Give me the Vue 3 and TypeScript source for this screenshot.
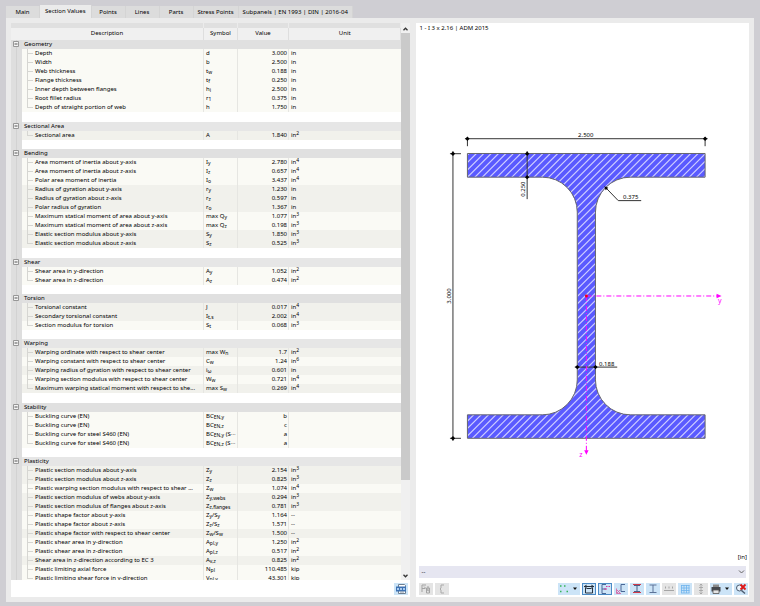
<script setup lang="ts">
import { ref } from 'vue'

interface Row {
  name: string
  symbol: string
  value: string
  unit: string
  shade: boolean
}
interface Group {
  title: string
  open: boolean
  rows: Row[]
}
interface Segment {
  text: string
  small: boolean
}

const r = (name: string, symbol: string, value: string, unit: string, shade = false): Row => ({
  name, symbol, value, unit, shade,
})

const tabs = ['Main', 'Section Values', 'Points', 'Lines', 'Parts', 'Stress Points', 'Subpanels | EN 1993 | DIN | 2016-04']
const activeTab = ref('Section Values')

const groups = ref<Group[]>([
  { title: 'Geometry', open: true, rows: [
    r('Depth', 'd', '3.000', 'in'),
    r('Width', 'b', '2.500', 'in'),
    r('Web thickness', 't{w}', '0.188', 'in'),
    r('Flange thickness', 't{f}', '0.250', 'in'),
    r('Inner depth between flanges', 'h{i}', '2.500', 'in'),
    r('Root fillet radius', 'r{1}', '0.375', 'in'),
    r('Depth of straight portion of web', 'h', '1.750', 'in'),
  ] },
  { title: 'Sectional Area', open: true, rows: [
    r('Sectional area', 'A', '1.840', 'in{2}', true),
  ] },
  { title: 'Bending', open: true, rows: [
    r('Area moment of inertia about y-axis', 'I{y}', '2.780', 'in{4}'),
    r('Area moment of inertia about z-axis', 'I{z}', '0.657', 'in{4}'),
    r('Polar area moment of inertia', 'I{o}', '3.437', 'in{4}'),
    r('Radius of gyration about y-axis', 'r{y}', '1.230', 'in', true),
    r('Radius of gyration about z-axis', 'r{z}', '0.597', 'in', true),
    r('Polar radius of gyration', 'r{o}', '1.367', 'in', true),
    r('Maximum statical moment of area about y-axis', 'max Q{y}', '1.077', 'in{3}'),
    r('Maximum statical moment of area about z-axis', 'max Q{z}', '0.198', 'in{3}'),
    r('Elastic section modulus about y-axis', 'S{y}', '1.850', 'in{3}', true),
    r('Elastic section modulus about z-axis', 'S{z}', '0.525', 'in{3}', true),
  ] },
  { title: 'Shear', open: true, rows: [
    r('Shear area in y-direction', 'A{y}', '1.052', 'in{2}'),
    r('Shear area in z-direction', 'A{z}', '0.474', 'in{2}'),
  ] },
  { title: 'Torsion', open: true, rows: [
    r('Torsional constant', 'J', '0.017', 'in{4}', true),
    r('Secondary torsional constant', 'I{t,s}', '2.002', 'in{4}', true),
    r('Section modulus for torsion', 'S{t}', '0.068', 'in{3}'),
  ] },
  { title: 'Warping', open: true, rows: [
    r('Warping ordinate with respect to shear center', 'max W{n}', '1.7', 'in{2}', true),
    r('Warping constant with respect to shear center', 'C{w}', '1.24', 'in{6}'),
    r('Warping radius of gyration with respect to shear center', 'i{ω}', '0.601', 'in', true),
    r('Warping section modulus with respect to shear center', 'W{w}', '0.721', 'in{4}'),
    r('Maximum warping statical moment with respect to she...', 'max S{w}', '0.269', 'in{4}', true),
  ] },
  { title: 'Stability', open: true, rows: [
    r('Buckling curve (EN)', 'BC{EN,y}', 'b', ''),
    r('Buckling curve (EN)', 'BC{EN,z}', 'c', ''),
    r('Buckling curve for steel S460 (EN)', 'BC{EN,y} (S···', 'a', ''),
    r('Buckling curve for steel S460 (EN)', 'BC{EN,z} (S···', 'a', ''),
  ] },
  { title: 'Plasticity', open: true, rows: [
    r('Plastic section modulus about y-axis', 'Z{y}', '2.154', 'in{3}', true),
    r('Plastic section modulus about z-axis', 'Z{z}', '0.825', 'in{3}', true),
    r('Plastic warping section modulus with respect to shear ...', 'Z{w}', '1.074', 'in{4}'),
    r('Plastic section modulus of webs about y-axis', 'Z{y,webs}', '0.294', 'in{3}', true),
    r('Plastic section modulus of flanges about z-axis', 'Z{z,flanges}', '0.781', 'in{3}', true),
    r('Plastic shape factor about y-axis', 'Z{y}/S{y}', '1.164', '--'),
    r('Plastic shape factor about z-axis', 'Z{z}/S{z}', '1.571', '--'),
    r('Plastic shape factor with respect to shear center', 'Z{w}/S{w}', '1.500', '--', true),
    r('Plastic shear area in y-direction', 'A{pl,y}', '1.250', 'in{2}'),
    r('Plastic shear area in z-direction', 'A{pl,z}', '0.517', 'in{2}'),
    r('Shear area in z-direction according to EC 3', 'A{v,z}', '0.825', 'in{2}', true),
    r('Plastic limiting axial force', 'N{pl}', '110.485', 'kip'),
    r('Plastic limiting shear force in y-direction', 'V{pl,y}', '43.301', 'kip'),
  ] },
])

// Text inside braces is set as a subscript or superscript.
function segments(source: string): Segment[] {
  return source
    .split(/(\{[^}]*\})/)
    .filter((part) => part !== '')
    .map((part) => part.startsWith('{')
      ? { text: part.slice(1, -1), small: true }
      : { text: part, small: false })
}

// 45 degree hatch lines across the whole section, clipped to its outline.
const hatch = Array.from({ length: 72 }, (_, i) => `M${(175 + i * 7.4).toFixed(1)} 440l290-290`).join('')

const ticks = [
  [467.5, 138.5], [705.5, 138.5], [453, 153.5], [453, 438.5],
  [527.3, 153.5], [527.3, 177], [577.5, 367.2], [595.7, 367.2],
]
</script>

<template>
  <main class="window">
    <nav class="tabs">
      <button
        v-for="tab in tabs"
        :key="tab"
        type="button"
        class="tab"
        :class="{ active: tab === activeTab }"
        @click="activeTab = tab"
      >{{ tab }}</button>
    </nav>

    <div class="content">
      <section class="values">
        <div class="table-area">
          <div class="table-clip">
            <table>
              <colgroup>
                <col class="c-gutter"><col class="c-name"><col class="c-symbol"><col class="c-value"><col>
              </colgroup>
              <thead>
                <tr class="strip"><td colspan="2"></td><td></td><td></td><td></td></tr>
                <tr class="heads">
                  <th colspan="2">Description</th><th>Symbol</th><th>Value</th><th>Unit</th>
                </tr>
              </thead>
              <tbody v-for="group in groups" :key="group.title" :class="{ long: group.rows.length > 4 }">
                <tr class="group">
                  <td class="gutter">
                    <button type="button" class="toggle" :aria-label="group.title" @click="group.open = !group.open">
                      <svg viewBox="0 0 7 7"><path d="M.5.5h5v5h-5z" fill="#f4f4f4" stroke="#979797" /><path d="M1.500 3h3" stroke="#555" /></svg>
                    </button>
                  </td>
                  <th colspan="4">{{ group.title }}</th>
                </tr>
                <template v-if="group.open">
                  <tr v-for="(row, i) in group.rows" :key="i" class="row" :class="{ shade: row.shade }">
                    <td class="gutter"></td>
                    <td class="name">{{ row.name }}</td>
                    <td class="symbol"><template v-for="(s, k) in segments(row.symbol)" :key="k"><sub v-if="s.small">{{ s.text }}</sub><template v-else>{{ s.text }}</template></template></td>
                    <td class="value">{{ row.value }}</td>
                    <td class="unit"><template v-for="(s, k) in segments(row.unit)" :key="k"><sup v-if="s.small">{{ s.text }}</sup><template v-else>{{ s.text }}</template></template></td>
                  </tr>
                </template>
                <tr class="spacer"><td class="gutter"></td><td colspan="4"></td></tr>
              </tbody>
            </table>
          </div>
          <div class="scrollbar">
            <button type="button" class="arrow" aria-label="Scroll up"><svg viewBox="0 0 9 6"><path d="M2.500 4.200 4.500 2.200 6.500 4.200" fill="none" stroke="#333" stroke-width="1.300" /></svg></button>
            <div class="track"><div class="thumb"></div></div>
            <button type="button" class="arrow" aria-label="Scroll down"><svg viewBox="0 0 9 6"><path d="M2.500 1.800 4.500 3.800 6.500 1.800" fill="none" stroke="#333" stroke-width="1.300" /></svg></button>
          </div>
        </div>
        <footer class="values-foot">
          <button type="button" class="tool" aria-label="Print table">
            <svg viewBox="0 0 14 12"><path d="M4.500 1.500h6l1 1v2h-7zM4.500 7.500h7v3h-7z" fill="#fff" stroke="#6f7f90" /><path d="M2 3.500h10v5H2z" fill="#3d72b4" /><path d="M3 5h2v2H3zM6 5h2v2H6zM9 5h2v2H9z" fill="#a9cbee" /><path d="M6 9h4" stroke="#8a98a8" /></svg>
          </button>
        </footer>
      </section>

      <section class="preview">
        <h1>1 - I 3 x 2.16 | ADM 2015</h1>
        <svg class="drawing" viewBox="416 34 333 516">
          <defs>
            <clipPath id="outline">
              <path d="M467.500 153.300H705.500V177H630.500A35 35 0 0 0 595.700 212V380A35 35 0 0 0 630.500 415H705.500V438.500H467.500V415H542.500A35 35 0 0 0 577.500 380V212A35 35 0 0 0 542.500 177H467.500Z" />
            </clipPath>
          </defs>
          <g clip-path="url(#outline)">
            <rect x="467" y="153" width="239" height="286" fill="#5a5aff" />
            <path :d="hatch" stroke="#ccccff" stroke-width="1.200" />
          </g>
          <path
            d="M467.500 153.300H705.500V177H630.500A35 35 0 0 0 595.700 212V380A35 35 0 0 0 630.500 415H705.500V438.500H467.500V415H542.500A35 35 0 0 0 577.500 380V212A35 35 0 0 0 542.500 177H467.500Z"
            fill="none" stroke="#66666c" stroke-width="1"
          />
          <g stroke="#333" stroke-width="1" fill="none">
            <path d="M465 138.500H708M467.500 137V146M705.500 137V146" />
            <path d="M453 151V441M450 153.500H461M450 438.500H461" />
            <path d="M527.300 151V199" />
            <path d="M606 187.500 618.500 200.500H641.500" />
            <path d="M575 367.200H617.500" />
          </g>
          <g fill="#000">
            <path v-for="p in ticks" :key="p.join()" :d="`M${p[0] - 2.2} ${p[1]}l2.200-2.200 2.200 2.200-2.200 2.200z`" />
            <path d="m604.500 186 4 1.500-2.500 2.500z" />
          </g>
          <g stroke="#ff00ff" stroke-width="1" stroke-dasharray="5 2 1 2">
            <path d="M586.600 296H718" />
            <path d="M586.600 296V451" />
          </g>
          <path d="M717 293.800 722 296 717 298.200ZM584.400 450.500H588.800L586.600 455Z" fill="#ff00ff" />
          <circle cx="586.600" cy="296" r="1.500" fill="#f00018" />
          <g class="dims">
            <text x="586" y="137" text-anchor="middle">2.500</text>
            <text x="631" y="199" text-anchor="middle">0.375</text>
            <text x="607" y="366" text-anchor="middle">0.188</text>
            <text transform="translate(525.500 189) rotate(-90)" text-anchor="middle">0.250</text>
            <text transform="translate(451.500 296) rotate(-90)" text-anchor="middle">3.000</text>
            <text class="axis" x="718.500" y="303">y</text>
            <text class="axis" x="579.500" y="457">z</text>
          </g>
        </svg>
        <div class="unit-note">[in]</div>
        <div class="picker">
          <select aria-label="Result"><option>--</option></select>
          <svg viewBox="0 0 9 6"><path d="M2 1.500 4.500 4 7 1.500" fill="none" stroke="#666" /></svg>
        </div>
        <div class="toolbar">
          <button type="button" class="tool off" aria-label="Compare sections">
            <svg viewBox="0 0 14 12"><path d="M3 2h4M3 2v7M3 5.500h3M5 3.500l5 5M7.500 5h3v5h-3zM9 3v5" fill="none" stroke="#a3a3a3" /></svg>
          </button>
          <button type="button" class="tool off" aria-label="Section outline">
            <svg viewBox="0 0 14 12"><path d="M9 2H6v3L5 6l1 1v3h3" fill="none" stroke="#a9a9a9" /></svg>
          </button>
          <span class="push"></span>
          <button type="button" class="tool wide" aria-label="Stress points">
            <svg viewBox="0 0 22 12"><path d="M2 3h1.500M6 3h1.500M2 8.500h1.500M8.500 8.500H10" stroke="#35b558" stroke-width="1.500" /><path d="M15 4.500h4L17 7z" fill="#111" /></svg>
          </button>
          <button type="button" class="tool on" aria-label="Dimensions">
            <svg viewBox="0 0 14 12"><path d="M3.500 5v5h7V5M2 3.500h10" fill="none" stroke="#26313d" /><path d="M2 3.500 4.500 1.500v4zM12 3.500 9.500 1.500v4z" fill="#26313d" /><path d="M4.500 5.500h5" stroke="#26313d" /></svg>
          </button>
          <button type="button" class="tool on" aria-label="Values">
            <svg viewBox="0 0 14 12"><path d="M8 1.500H4v9h4M4 6h4" fill="none" stroke="#4a6796" /><path d="M8 3.500h1.500M10.500 3.500H12M6 6h3" stroke="#d5389a" /></svg>
          </button>
          <button type="button" class="tool" aria-label="Principal axes">
            <svg viewBox="0 0 14 12"><path d="M11 1.500H7v7h4" fill="none" stroke="#4a6796" /><path d="M3 7l3 3M6 7l-3 3M2.500 5.500v5H7" fill="none" stroke="#d5589a" stroke-width=".8" /></svg>
          </button>
          <button type="button" class="tool" aria-label="Flange lines">
            <svg viewBox="0 0 14 12"><path d="M3 1.500h8M3 9.500h8" stroke="#d23b4b" /><path d="M4 2.500h6M7 2v7M4 8.500h6" stroke="#4a5f86" /></svg>
          </button>
          <button type="button" class="tool" aria-label="Section shape">
            <svg viewBox="0 0 14 12"><path d="M3.500 2h7M7 2v7.500M3.500 9.500h7" fill="none" stroke="#5c7398" /></svg>
          </button>
          <button type="button" class="tool off" aria-label="Numbering">
            <svg viewBox="0 0 14 12"><path d="M2 7.500h10" stroke="#a5a5a5" /><path d="M3 4.500h1M6.500 4.500h1M10 4.500h1" stroke="#a5a5a5" stroke-width="2" /></svg>
          </button>
          <button type="button" class="tool" aria-label="Grid">
            <svg viewBox="0 0 14 12"><path d="M3.500 2v8M6 2v8M8.500 2v8M11 2v8M3 2.500h8.500M3 5h8.500M3 7.500h8.500M3 10h8.500" stroke="#6fb4ee" stroke-width=".8" /></svg>
          </button>
          <button type="button" class="tool off" aria-label="Fit height">
            <svg viewBox="0 0 14 12"><path d="M7 1v10M5.500 2.500 7 1l1.500 1.500M5.500 9.500 7 11l1.500-1.500M5 4.500h4M5 7.500h4" fill="none" stroke="#a0a0a0" stroke-width=".8" /></svg>
          </button>
          <button type="button" class="tool wide" aria-label="Print">
            <svg viewBox="0 0 22 12"><path d="M3 1.500h6V4H3z" fill="#8a8a8a" /><path d="M1.500 4h9v4.500h-9z" fill="#44484e" /><path d="M3 7h6v3.500H3z" fill="#e4e4e4" stroke="#555" stroke-width=".8" /><path d="M15 4.500h4L17 7z" fill="#111" /></svg>
          </button>
          <button type="button" class="tool" aria-label="Reset zoom">
            <svg viewBox="0 0 14 12"><circle cx="5.500" cy="5" r="3" fill="#e9f3fb" stroke="#4b5c70" /><path d="M7.500 7.500l3.500 3" stroke="#4b5c70" stroke-width="1.500" /><path d="M6.500 1.500l5 5M11.500 1.500l-5 5" stroke="#e01818" stroke-width="1.800" /></svg>
          </button>
        </div>
      </section>
    </div>
  </main>
</template>

<style>
body {
  background: #cfced3;
}
</style>

<style scoped>
.window {
  box-sizing: border-box;
  height: 100vh;
  padding: 5px 6px 4px;
  display: flex;
  flex-direction: column;
  font: 6px/9px "Noto Sans", "Open Sans", sans-serif;
  color: #000;
}
button, select {
  font: inherit;
  color: inherit;
  border: 0;
  padding: 0;
  margin: 0;
}
.tabs {
  display: flex;
  align-items: flex-end;
  height: 13px;
}
.tab {
  box-sizing: border-box;
  min-width: 34px;
  height: 12px;
  padding: 0 4px;
  background: #dcdcdc;
  border-right: 1px solid #d4d4d4;
}
.tab.active {
  height: 13px;
  padding: 0 5px;
  background: #ebebeb;
}
.content {
  flex: 1;
  min-height: 0;
  display: flex;
  gap: 6px;
  padding: 5px 5px;
  background: #ebebeb;
}
.values {
  flex: 400 1 0;
  min-width: 0;
  display: flex;
  flex-direction: column;
  background: #fff;
}
.table-area {
  flex: 1;
  min-height: 0;
  display: flex;
}
.table-clip {
  flex: 1;
  min-width: 0;
  overflow: hidden;
}
table {
  width: 100%;
  table-layout: fixed;
  border-collapse: separate;
  border-spacing: 0;
}
td, th {
  padding: 0;
  height: 9px;
  font-weight: 400;
  white-space: nowrap;
}
.c-gutter { width: 11px; }
.c-name { width: 182px; }
.c-symbol { width: 34px; }
.c-value { width: 51px; }
.strip td {
  height: 5px;
  background: #e0e0e0;
  border-right: 1px solid #ebebeb;
}
.heads th {
  height: 12px;
  padding-bottom: 1px;
  background: #f0f0f0;
  border-right: 1px solid #dedede;
}
.strip td, .heads th { box-sizing: border-box; }
.gutter {
  background: linear-gradient(#d2d2d2, #d2d2d2) 5px 0 / 1px 100% no-repeat #dedede;
}
.group th {
  padding-left: 2px;
  text-align: left;
  background: #e0e0e0;
}
tbody:nth-of-type(even) .group th { background: #e6e6e6; }
.toggle {
  display: block;
  width: 7px;
  height: 7px;
  margin-left: 2px;
  background: none;
}
svg { display: block; }
.row td:not(.gutter) { background-color: #fafaf5; }
.row.shade td:not(.gutter) { background-color: #f1f1ec; }
.name, .symbol, .value {
  box-sizing: border-box;
  border-right: 1px solid #e6e6e2;
}
.name {
  padding-left: 13px;
  background-image: linear-gradient(#d6d6d2, #d6d6d2), linear-gradient(#d6d6d2, #d6d6d2);
  background-size: 1px 100%, 6px 1px;
  background-position: 5px 0, 5px 4px;
  background-repeat: no-repeat;
}
.row:nth-last-child(2) .name { background-size: 1px 5px, 6px 1px; }
.symbol, .unit { padding-left: 2px; }
.value {
  padding-right: 1px;
  text-align: right;
}
sub, sup {
  font-size: 5px;
  line-height: 0;
}
sub { vertical-align: -1px; }
sup { vertical-align: 2px; }
.spacer td:not(.gutter) { background: #fff; }
.long .spacer td { height: 10px; }
.scrollbar {
  width: 9px;
  padding-top: 2px;
  display: flex;
  flex-direction: column;
  background: #f0f0f0;
}
.arrow {
  height: 8px;
  background: none;
}
.track { flex: 1; }
.thumb {
  height: 83%;
  background: #cacaca;
}
.values-foot {
  height: 17px;
  padding-right: 2px;
  display: flex;
  justify-content: flex-end;
  align-items: center;
}
.preview {
  flex: 333 1 0;
  min-width: 0;
  display: flex;
  flex-direction: column;
  background: #fff;
}
h1 {
  margin: 0;
  padding: 1px 3px;
  font: inherit;
}
.drawing {
  flex: 1;
  min-height: 0;
  width: 100%;
}
.dims { font-size: 6px; fill: #000; }
.axis { font-size: 7px; fill: #ff00ff; }
.unit-note {
  padding: 3px 2px 1px;
  text-align: right;
}
.picker {
  height: 12px;
  margin: 3px 3px 5px;
  display: flex;
  align-items: center;
  background: #e6e6f1;
}
.picker select {
  flex: 1;
  height: 12px;
  padding-left: 2px;
  appearance: none;
  background: none;
}
.picker svg {
  width: 9px;
  height: 6px;
}
.toolbar {
  display: flex;
  gap: 2px;
  padding: 0 1px 2px 3px;
}
.push { flex: 1; }
.tool {
  box-sizing: border-box;
  width: 14px;
  height: 12px;
  background: #cce4f7;
}
.tool svg { height: 12px; }
.tool.wide { width: 22px; }
.tool.off { background: #e4e4e4; }
.tool.on { box-shadow: inset 0 0 0 1px #4c8bc6; }
</style>
